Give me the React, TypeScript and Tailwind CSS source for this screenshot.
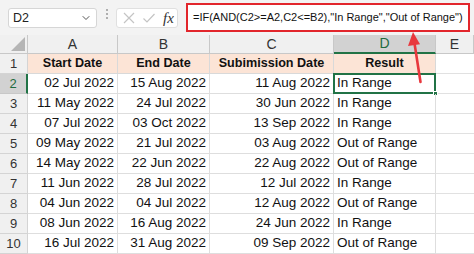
import { ChevronDown } from "lucide-react";

const rows = [
  ["02 Jul 2022", "15 Aug 2022", "11 Aug 2022", "In Range"],
  ["11 May 2022", "24 Jul 2022", "30 Jun 2022", "In Range"],
  ["07 Jul 2022", "03 Oct 2022", "13 Sep 2022", "In Range"],
  ["09 May 2022", "21 Jul 2022", "03 Aug 2022", "Out of Range"],
  ["14 May 2022", "22 Jun 2022", "22 Aug 2022", "Out of Range"],
  ["11 Jun 2022", "28 Jul 2022", "12 Jul 2022", "In Range"],
  ["04 Jun 2022", "04 Jul 2022", "12 Aug 2022", "Out of Range"],
  ["08 Jun 2022", "16 Aug 2022", "24 Jun 2022", "In Range"],
  ["16 Jul 2022", "31 Aug 2022", "09 Sep 2022", "Out of Range"],
];

const cols = ["A", "B", "C", "D", "E"];
const heads = ["Start Date", "End Date", "Subimission Date", "Result"];

function Toolbar() {
  return (
    <div className="flex h-[35px] shrink-0 items-start bg-[#f3f3f3] pl-[8px]">
      <div className="mt-[8px] flex h-[20px] w-[89px] items-center justify-between rounded-[3px] border border-[#d6d6d6] bg-white pl-[4px] pr-[4px] text-[12.5px] text-[#222]">
        D2
        <ChevronDown className="h-3 w-3 text-[#555]" strokeWidth={2} />
      </div>
      <div className="mt-[9px] flex w-[19px] flex-col items-center gap-[2px]">
        <span className="h-[2px] w-[2px] rounded-full bg-[#999]" />
        <span className="h-[2px] w-[2px] rounded-full bg-[#999]" />
        <span className="h-[2px] w-[2px] rounded-full bg-[#999]" />
      </div>
      <div className="mt-[8px] flex h-[20px] w-[62px] items-center rounded-[3px] border border-[#e0e0e0] bg-white pl-[4px]">
        <svg width="14" height="14" viewBox="0 0 14 14" className="ml-[1px]">
          <path d="M2 2 L12 12 M12 2 L2 12" stroke="#c4c4c4" strokeWidth="1.2" fill="none" />
        </svg>
        <svg width="14" height="14" viewBox="0 0 14 14" className="ml-[6px]">
          <path d="M1.5 7.5 L5 11 L12.5 3" stroke="#c4c4c4" strokeWidth="1.2" fill="none" />
        </svg>
        <span className="ml-[7px] font-['Liberation_Serif',serif] text-[15px] italic leading-none text-[#333]">
          fx
        </span>
      </div>
      <div className="ml-[8px] mt-[3px] flex h-[29px] w-[284px] items-center overflow-hidden whitespace-nowrap border-2 border-[#e2262c] bg-white pl-[5px] text-[11px] text-[#111]">
        =IF(AND(C2&gt;=A2,C2&lt;=B2),"In Range","Out of Range")
      </div>
    </div>
  );
}

export default function App() {
  return (
    <div className="relative flex h-[254px] w-[474px] flex-col overflow-hidden bg-white font-['Liberation_Sans',Arial,sans-serif]">
      <Toolbar />
      <div className="grid grid-cols-[28px_90px_92px_124px_102px_38px] grid-rows-[19px_repeat(10,20px)] text-[13.5px] text-[#111]">
        <div className="relative border-b border-r border-[#c8c8c8] bg-[#f0f0f0]">
          <svg width="14" height="14" viewBox="0 0 14 14" className="absolute bottom-[2px] right-[2px]">
            <path d="M14 0 L14 14 L0 14 Z" fill="#b5b5b5" />
          </svg>
        </div>
        {cols.map((c) =>
          c === "D" ? (
            <div
              key={c}
              className="flex items-center justify-center border-b-2 border-r border-b-[#217346] border-r-[#c8c8c8] bg-[#d2d2d2] text-[14px] text-[#1f6b3f]"
            >
              {c}
            </div>
          ) : (
            <div
              key={c}
              className="flex items-center justify-center border-b border-r border-[#c8c8c8] bg-[#f0f0f0] text-[14px] text-[#333]"
            >
              {c}
            </div>
          ),
        )}

        <div className="flex items-center justify-center border-b border-r border-[#d4d4d4] bg-[#f0f0f0] text-[13px] text-[#333]">
          1
        </div>
        {heads.map((h) => (
          <div
            key={h}
            className="flex items-center justify-center whitespace-nowrap border-b border-r border-[#d9d9d9] bg-[#fce4d6] text-[12.6px] font-bold"
          >
            {h}
          </div>
        ))}
        <div className="border-b border-[#e1e1e1]" />

        {rows.map((r, i) => (
          <Row key={i} n={i + 2} r={r} />
        ))}
      </div>

      <svg
        width="474"
        height="254"
        viewBox="0 0 474 254"
        className="pointer-events-none absolute left-0 top-0"
      >
        <path d="M420.5 82 L414.6 44" stroke="#e8383d" strokeWidth="2.6" strokeLinecap="round" />
        <path d="M413 32 L408 46 L420 44.2 Z" fill="#e8383d" />
      </svg>
    </div>
  );
}

function Row({ n, r }: { n: number; r: string[] }) {
  const sel = n === 2;
  return (
    <>
      {sel ? (
        <div className="flex items-center justify-center border-b border-r-2 border-b-[#c8c8c8] border-r-[#217346] bg-[#d2d2d2] text-[13px] text-[#1f6b3f]">
          {n}
        </div>
      ) : (
        <div className="flex items-center justify-center border-b border-r border-[#d4d4d4] bg-[#f0f0f0] text-[13px] text-[#333]">
          {n}
        </div>
      )}
      <div className="flex items-center justify-end border-b border-r border-[#dedede] pr-[3px]">{r[0]}</div>
      <div className="flex items-center justify-end border-b border-r border-[#dedede] pr-[3px]">{r[1]}</div>
      <div className="flex items-center justify-end border-b border-r border-[#dedede] pr-[3px]">{r[2]}</div>
      <div className="relative flex items-center border-b border-r border-[#dedede] pl-[3px]">
        {r[3]}
        {sel && (
          <>
            <span className="absolute -bottom-px -left-px -right-px -top-px border-2 border-[#217346]" />
            <span className="absolute -bottom-[3px] -right-[3px] h-[5px] w-[5px] border border-white bg-[#217346]" />
          </>
        )}
      </div>
      <div className="border-b border-[#e1e1e1]" />
    </>
  );
}
